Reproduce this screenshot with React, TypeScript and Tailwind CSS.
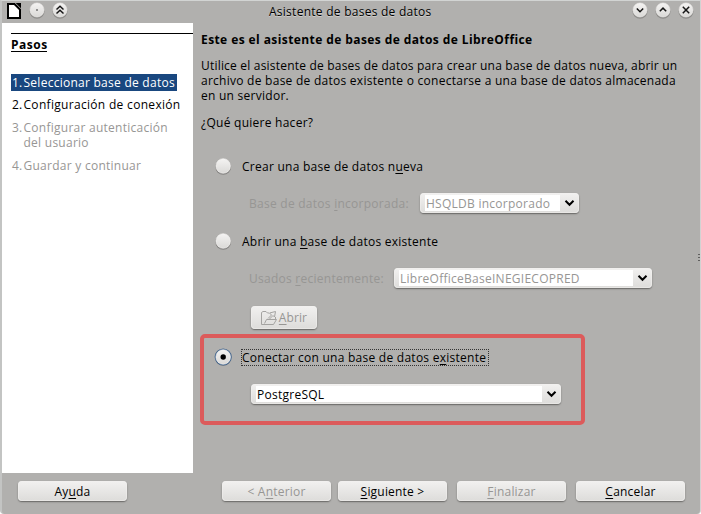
import type { ReactNode } from "react";

function RoundButton({ d, dot }: { d?: string; dot?: boolean }) {
  return (
    <svg className="block h-[18px] w-[16px] shrink-0 overflow-visible" viewBox="0 0 16 18" fill="none">
      <circle cx="8" cy="9.2" r="7.6" fill="#83827f" opacity=".75" />
      <circle cx="8" cy="8" r="7" fill="url(#knob)" stroke="#f1f0ef" strokeWidth=".6" />
      {dot && <circle cx="8" cy="8" r=".8" fill="#222" />}
      {d && <path d={d} stroke="#161616" strokeWidth="1.5" />}
    </svg>
  );
}

function Radio({ checked }: { checked?: boolean }) {
  return (
    <svg className="block h-[18px] w-[18px] shrink-0 overflow-visible" viewBox="0 0 18 18">
      <circle cx="9.2" cy="9.8" r="7.9" fill="#777674" opacity=".75" />
      {checked && <circle cx="9.2" cy="9" r="8.6" fill="#44658c" />}
      <circle cx="9.2" cy="9" r="7.3" fill="url(#knob)" stroke="#f6f5f4" strokeWidth=".6" />
      {checked && <circle cx="9.2" cy="9" r="2.7" fill="#000" />}
    </svg>
  );
}

const RAISED =
  "rounded-[4px] bg-linear-to-b from-[#f2f1f0] to-[#dddcda] shadow-[0_1px_1.5px_#666563,inset_0_0_0_1px_#f1f0ef88]";

function Button({ className, children, disabled }: { className: string; children: ReactNode; disabled?: boolean }) {
  return (
    <button
      className={`flex shrink-0 items-center justify-center whitespace-nowrap ${RAISED} ${disabled ? "text-[#979694]" : "text-black"} ${className}`}
    >
      {children}
    </button>
  );
}

function Select({ className, children, disabled }: { className: string; children: ReactNode; disabled?: boolean }) {
  return (
    <div className={`flex h-5 shrink-0 items-center pl-[5px] ${RAISED} ${className}`}>
      <div
        className={`flex h-4 flex-1 items-center whitespace-nowrap bg-white pl-[1px] ${disabled ? "text-[#979694]" : "text-black"}`}
      >
        {children}
      </div>
      <svg className="block h-4 w-[19px] shrink-0" viewBox="0 0 19 16" fill="none">
        <path d="M5.5 5.8 9.5 9.8 13.5 5.8" stroke="#000" strokeWidth="2" />
      </svg>
    </div>
  );
}

function U({ children }: { children: ReactNode }) {
  return <span className="underline decoration-1 underline-offset-2">{children}</span>;
}

export default function App() {
  return (
    <div className="flex h-[514px] w-[701px] flex-col overflow-hidden rounded-b-[4px] border-t border-r border-l-2 border-t-[#d2d4d3] border-r-[#d2d3d2] border-l-[#c3c4c3] bg-[#b1b0ae] font-['Open_Sans','Noto_Sans',sans-serif] text-[12px] leading-[15px] tracking-[0.26px] text-black">
      <header className="flex h-[22px] shrink-0 items-start pr-[6px] pl-[5px]">
        <svg className="mt-[2px] block h-4 w-[14px]" viewBox="0 0 14 16">
          <defs>
            <linearGradient id="knob" x1="0" y1="0" x2="0" y2="1">
              <stop offset="0" stopColor="#f4f3f2" />
              <stop offset="1" stopColor="#dad9d7" />
            </linearGradient>
          </defs>
          <path d="M0 0H9L14 5V16H0Z" fill="#000" />
          <path d="M2 2H7L12 7V14H2Z" fill="#fff" />
          <path d="M9 0H14V5Z" fill="#000" />
          <path d="M8 0 14 6" stroke="#b1b0ae" strokeWidth=".7" />
        </svg>
        <div className="mt-[1px] ml-[8px] flex gap-[7px]">
          <RoundButton dot />
          <RoundButton d="M4.5 7.5 8 4.2 11.5 7.5M4.5 11.5 8 8.2 11.5 11.5" />
        </div>
        <div className="mt-[3px] flex-1 pl-[201px] [text-shadow:0_1px_0_#cfcecc]">
          Asistente de bases de datos
        </div>
        <div className="mt-[1px] flex gap-[7px]">
          <RoundButton d="M4.8 6.5 8 9.7 11.2 6.5" />
          <RoundButton d="M4.8 9.3 8 6.1 11.2 9.3" />
          <RoundButton d="M4.8 4.8 11.2 11.2M11.2 4.8 4.8 11.2" />
        </div>
      </header>

      <div className="flex h-[450px] shrink-0">
        <aside className="w-[191px] shrink-0 bg-white pt-[10px] pl-[9px]">
          <div className="h-px bg-black" />
          <h2 className="mt-[4px] flex h-[14px] w-9 items-center border-b border-black font-bold tracking-[0.5px]">Pasos</h2>
          <ol className="mt-[22px] whitespace-nowrap">
            <li className="flex h-[17px] w-[166px] items-center bg-[#19477f] pl-[1px] text-white">
              <span className="w-[11.5px]">1.</span>
              <span>Seleccionar base de datos</span>
            </li>
            <li className="mt-[6px] flex pl-[1px]">
              <span className="w-[11.5px]">2.</span>
              <span className="tracking-[0.31px]">Configuración de conexión</span>
            </li>
            <li className="mt-[8px] flex pl-[1px] text-[#979694]">
              <span className="w-[11.5px]">3.</span>
              <span>Configurar autenticación<br />del usuario</span>
            </li>
            <li className="mt-[8px] flex pl-[1px] text-[#979694]">
              <span className="w-[11.5px]">4.</span>
              <span>Guardar y continuar</span>
            </li>
          </ol>
        </aside>

        <main className="flex w-[504px] flex-col whitespace-nowrap pl-[8px]">
          <h1 className="mt-[9px] font-bold tracking-[0.41px]">Este es el asistente de bases de datos de LibreOffice</h1>
          <p className="mt-[11px]">
            <span className="tracking-[0.2px]">Utilice el asistente de bases de datos para crear una base de datos nueva, abrir un</span><br />
            archivo de base de datos existente o conectarse a una base de datos almacenada<br />
            en un servidor.
          </p>
          <p className="mt-[12px]">¿Qué quiere hacer?</p>

          <div className="mt-[27px] flex h-[18px] items-center pl-[13px]">
            <Radio />
            <span className="ml-[10px]">Crear una base de datos n<U>u</U>eva</span>
          </div>
          <div className="mt-[18px] flex h-5 items-center pl-[48px]">
            <span className="w-[171px] text-[#979694]">Base de datos <U>i</U>ncorporada:</span>
            <Select className="w-[159px]" disabled>HSQLDB incorporado</Select>
          </div>
          <div className="mt-[19px] flex h-[18px] items-center pl-[13px]">
            <Radio />
            <span className="ml-[10px]">Abrir una <U>b</U>ase de datos existente</span>
          </div>
          <div className="mt-[18px] flex h-5 items-center pl-[48px]">
            <span className="w-[145px] text-[#979694]">Usados <U>r</U>ecientemente:</span>
            <Select className="w-[258px]" disabled>LibreOfficeBaseINEGIECOPRED</Select>
          </div>
          <div className="mt-[18px] flex pl-[50px]">
            <Button className="h-[23px] w-[66px] gap-[2px]" disabled>
              <svg className="block h-4 w-4" viewBox="0 0 16 16" fill="none" stroke="#a4a3a1">
                <path d="M.5 14.5V2.5L2 1.5H5L6.5 3H8M.5 14.5H12.5L15.5 9.5H5.5L3.5 13.5M14.5 9V7" />
                <path d="M7 8.5 10.5 5 8.5 3 14.5 1.5 13.5 7 12 5.5 8.5 9" />
              </svg>
              <span className="tracking-[0.1px]"><U>A</U>brir</span>
            </Button>
          </div>

          <section className="mt-[5px] -ml-px h-[91px] w-[385px] rounded-[5px] border-4 border-[#dc5b5b] pt-[10px] pl-[10px]">
            <div className="flex h-[18px] items-center">
              <Radio checked />
              <span className="ml-[9px] flex h-[17px] w-[248px] items-center border border-dotted border-[#333]">
                <span>Conectar con una base de datos e<U>x</U>istente</span>
              </span>
            </div>
            <div className="mt-[18px] pl-[37px]">
              <Select className="w-[310px]">PostgreSQL</Select>
            </div>
          </section>
        </main>

        <div className="mt-[231px] flex w-[3px] flex-col items-end gap-[2px]">
          <div className="h-px w-[2px] bg-[#5f5f5e]" />
          <div className="h-px w-[2px] bg-[#5f5f5e]" />
          <div className="h-px w-[2px] bg-[#5f5f5e]" />
        </div>
      </div>

      <footer className="mt-[8px] flex pl-[16px] tracking-[0.2px]">
        <Button className="h-5 w-[109px]"><span>Ay<U>u</U>da</span></Button>
        <Button className="ml-[95px] h-5 w-[109px]" disabled><span>&lt; A<U>n</U>terior</span></Button>
        <Button className="ml-[7px] h-5 w-[109px]"><span><U>S</U>iguiente &gt;</span></Button>
        <Button className="ml-[10px] h-5 w-[109px]" disabled><span><U>F</U>inalizar</span></Button>
        <Button className="ml-[10px] h-5 w-[109px]"><span><U>C</U>ancelar</span></Button>
      </footer>
    </div>
  );
}
